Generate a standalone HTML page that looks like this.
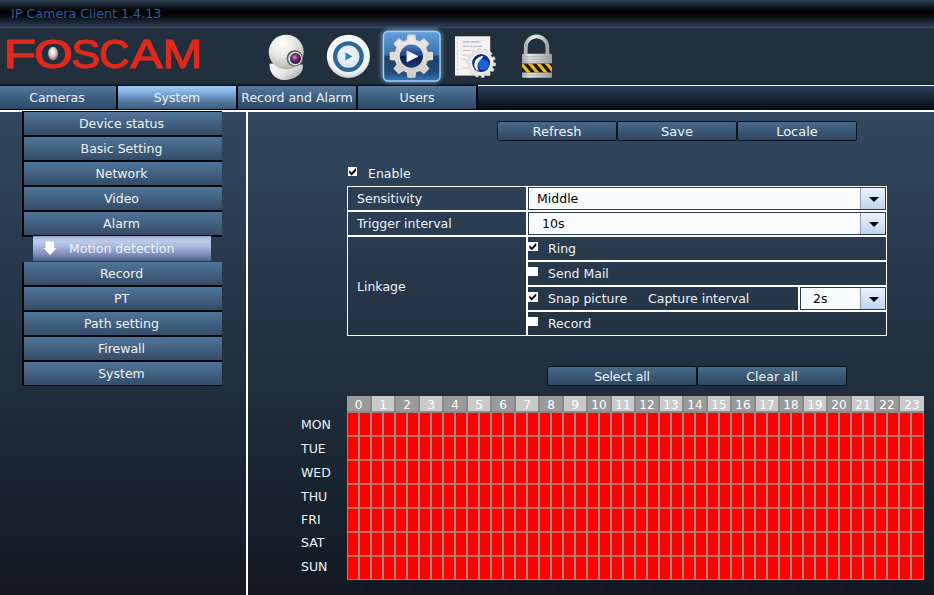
<!DOCTYPE html>
<html>
<head>
<meta charset="utf-8">
<title>IP Camera Client</title>
<style>
html,body{margin:0;padding:0;}
body{width:934px;height:595px;overflow:hidden;position:relative;background:#1a2230;
  font-family:"DejaVu Sans","Liberation Sans",sans-serif;font-size:12.5px;color:#eef2f6;}
.abs{position:absolute;}
#titlebar{left:0;top:0;width:934px;height:30px;background:linear-gradient(to bottom,#2f3f52 0px,#18222e 5px,#060809 10px,#000000 13px,#090b0d 16px,#161e28 20px,#223048 24.5px,#2b3d52 26.5px,#34495b 27.5px,#1e2d39 29px,#21303c 30px);}
#titletxt{left:11px;top:6px;color:#2a5da3;font-size:12.7px;line-height:16px;white-space:nowrap;}
#header{left:0;top:30px;width:934px;height:55px;background:linear-gradient(to bottom,#21303c 0px,#21303c 52px,#1c2a35 53.5px,#13202a 55px);}
#tabbar{left:0;top:85px;width:934px;height:25px;background:linear-gradient(to bottom,#ffffff 0px,#ffffff 1px,#2c405a 1px,#1d2b3e 10px,#0f1620 20px,#080c12 25px);}
.tab{position:absolute;top:0;height:23px;width:118px;text-align:center;line-height:23px;border-right:2px solid #03060a;border-top:1px solid #03060a;border-bottom:1px solid #03060a;background:linear-gradient(to bottom,#587a9b 0%,#45668a 35%,#385778 65%,#2e4966 100%);white-space:nowrap;}
.tab.sel{background:linear-gradient(to bottom,#9fcbf3 0%,#86b3e2 25%,#6690be 50%,#4f7198 75%,#3f5b7b 100%);}
#hline{left:0;top:110px;width:934px;height:2px;background:#fff;}
#main{left:0;top:112px;width:934px;height:483px;
  background:linear-gradient(to bottom,#324860 0%,#121922 100%);}
#vline{left:246px;top:110px;width:2px;height:485px;background:#fff;}
.sb{position:absolute;left:22px;width:195px;padding-right:3px;height:23px;line-height:24px;text-align:center;
  border-left:2px solid #04070b;border-bottom:2px solid #04070b;
  background:linear-gradient(to bottom,#50759a 0%,#436382 45%,#344c67 100%);white-space:nowrap;}
#sbtop{left:22px;top:111px;width:200px;height:1px;background:#04070b;}
#motion{left:33px;top:236px;width:178px;height:24.5px;line-height:26px;background:linear-gradient(to bottom,#8f9fc3 0%,#b4c2e2 10%,#bccae8 22%,#a9b9dd 42%,#90a0cc 60%,#7484b2 80%,#5a6a92 95%,#536088 100%);white-space:nowrap;}
.btn{position:absolute;height:18px;line-height:20px;font-size:13px;width:118px;text-align:center;border:1px solid #0b131d;
  background:linear-gradient(to bottom,#4a6a89 0%,#3b5876 50%,#30475f 100%);border-radius:2px;white-space:nowrap;}
.cb{position:absolute;width:9.6px;height:9.7px;background:#fff;}
.lbl{position:absolute;white-space:nowrap;line-height:16px;margin-top:1px;}
.cell{position:absolute;border:1px solid #fff;box-sizing:border-box;}
.sl{position:absolute;box-sizing:border-box;border:1px solid #2b3a4d;background:#fbfcfe;color:#000;}
.sl .dd{position:absolute;right:0;top:0;bottom:0;width:24px;border-left:1px solid #8c9cc0;
  background:linear-gradient(to bottom,#edf3fb 0%,#d6e4f6 50%,#bdd3ef 100%);}
.sl .dd:after{content:"";position:absolute;left:8px;top:8.7px;border-left:5px solid transparent;border-right:5px solid transparent;border-top:5px solid #000;}
.sl span{position:absolute;top:3px;margin-left:-1px;line-height:16px;white-space:nowrap;}
#grid{left:347px;top:396px;width:577px;height:184px;background:#8a8a8a;overflow:hidden;}
#ghead{position:absolute;left:0;top:0;width:577px;height:15px;}
#ghead div{position:absolute;top:0;width:22px;height:15px;line-height:19px;overflow:hidden;text-align:center;font-size:12px;color:#fff;}
#ghead .h0{background:#9b9b9b;}
#ghead .h1{background:#c9c9c9;}
#ghead .h0:first-child{left:0 !important;width:23px;}
#ghead .h1:last-child{width:24px;}
#gbody{position:absolute;left:0;top:15px;width:577px;height:169px;
 background:
 linear-gradient(#8a8a8a,#8a8a8a) 0 0/100% 2px no-repeat,
 linear-gradient(#b88080,#b88080) 576px 0/1px 100% no-repeat,
 linear-gradient(to bottom,#fe0000 0,#fe0000 22px,#cc6e62 22px,#cc6e62 24px) 575px 2px/1px 24px repeat-y,
 repeating-linear-gradient(to right,#9c8686 0px,#9c8686 2px,transparent 2px,transparent 12px) -1px 0/12px 100% repeat-x,
 repeating-linear-gradient(to bottom,#cc6e62 0px,#cc6e62 2px,transparent 2px,transparent 24px) 0 0/100% 24px repeat-y,
 #fe0000;}
.cb.on:after{content:"";position:absolute;left:0;top:0;width:10px;height:10px;background:#000;clip-path:polygon(1.4px 3.4px,3.8px 5.8px,8.2px 1.2px,8.2px 4.1px,3.8px 8.6px,1.4px 6.3px);}
</style>
</head>
<body>
<div id="titlebar" class="abs"></div>
<div id="titletxt" class="abs">IP Camera Client 1.4.13</div>
<div id="header" class="abs"></div>
<svg id="hdr" class="abs" style="left:0;top:0" width="934" height="86" viewBox="0 0 934 86">
<defs>
<radialGradient id="gSph" cx="0.38" cy="0.25" r="0.85"><stop offset="0" stop-color="#ffffff"/><stop offset="0.4" stop-color="#e9e9e7"/><stop offset="0.75" stop-color="#c6c6c4"/><stop offset="1" stop-color="#9a9a9a"/></radialGradient>
<linearGradient id="gBase" x1="0" y1="0" x2="1" y2="0.6"><stop offset="0" stop-color="#f6f6f6"/><stop offset="0.5" stop-color="#ececec"/><stop offset="1" stop-color="#b4b4b4"/></linearGradient>
<radialGradient id="gLens" cx="0.4" cy="0.35" r="0.7"><stop offset="0" stop-color="#c898cc"/><stop offset="0.45" stop-color="#7a3282"/><stop offset="1" stop-color="#2c0c32"/></radialGradient>
<linearGradient id="gRing" x1="0" y1="0" x2="1" y2="1"><stop offset="0" stop-color="#4c5246"/><stop offset="1" stop-color="#7c8074"/></linearGradient>
<radialGradient id="gPlayO" cx="0.5" cy="0.4" r="0.6"><stop offset="0" stop-color="#ffffff"/><stop offset="0.8" stop-color="#f2f5f8"/><stop offset="1" stop-color="#c4ccd6"/></radialGradient>
<radialGradient id="gPlayI" cx="0.5" cy="0.45" r="0.6"><stop offset="0" stop-color="#ffffff"/><stop offset="1" stop-color="#d4dfea"/></radialGradient>
<linearGradient id="gTile" x1="0" y1="0" x2="0" y2="1"><stop offset="0" stop-color="#62a0dc"/><stop offset="0.47" stop-color="#3a72ac"/><stop offset="0.51" stop-color="#1f4268"/><stop offset="0.8" stop-color="#1f4874"/><stop offset="1" stop-color="#3a78b8"/></linearGradient>
<linearGradient id="gGear" x1="0" y1="0" x2="0" y2="1"><stop offset="0" stop-color="#efeeea"/><stop offset="1" stop-color="#cdcac3"/></linearGradient>
<linearGradient id="gHub" x1="0" y1="0" x2="0" y2="1"><stop offset="0" stop-color="#4d7cc0"/><stop offset="0.5" stop-color="#1c3c7c"/><stop offset="0.52" stop-color="#0c1c48"/><stop offset="1" stop-color="#1c3a78"/></linearGradient>
<radialGradient id="gHub2" cx="0.5" cy="0.55" r="0.6"><stop offset="0" stop-color="#2a78e8"/><stop offset="0.7" stop-color="#0c3cb0"/><stop offset="1" stop-color="#082070"/></radialGradient>
<linearGradient id="gLockB" x1="0" y1="0" x2="1" y2="0"><stop offset="0" stop-color="#a9adad"/><stop offset="0.25" stop-color="#e4e6e6"/><stop offset="0.6" stop-color="#c6c9c9"/><stop offset="1" stop-color="#969a9a"/></linearGradient>
<linearGradient id="gShk" x1="0" y1="0" x2="1" y2="0"><stop offset="0" stop-color="#aeb2b2"/><stop offset="0.3" stop-color="#eceeee"/><stop offset="0.7" stop-color="#d0d3d3"/><stop offset="1" stop-color="#a4a8a8"/></linearGradient>
<radialGradient id="gEye" cx="0.45" cy="0.4" r="0.6"><stop offset="0" stop-color="#ffffff"/><stop offset="0.5" stop-color="#d8d0cc"/><stop offset="1" stop-color="#8c7470"/></radialGradient>
<filter id="fGlow" x="-30%" y="-30%" width="160%" height="160%"><feGaussianBlur stdDeviation="2.2"/></filter>
<clipPath id="cLock"><rect x="522" y="63.5" width="30" height="9"/></clipPath>
</defs>
<!-- logo -->
<title>FOSCAM</title>
<text aria-label="FOSCAM" y="68.30" font-family="Liberation Sans, sans-serif" font-size="40.99" fill="#e2281b" stroke="#e2281b" stroke-width="1.0" stroke-linejoin="round"><tspan x="2.90" textLength="32.80" lengthAdjust="spacingAndGlyphs">F</tspan><tspan x="33.64" textLength="39.01" lengthAdjust="spacingAndGlyphs">O</tspan><tspan x="71.10" textLength="28.93" lengthAdjust="spacingAndGlyphs">S</tspan><tspan x="98.75" textLength="30.40" lengthAdjust="spacingAndGlyphs">C</tspan><tspan x="130.10" textLength="32.24" lengthAdjust="spacingAndGlyphs">A</tspan><tspan x="162.27" textLength="39.91" lengthAdjust="spacingAndGlyphs">M</tspan></text>
<ellipse cx="53.1" cy="53.5" rx="5" ry="6.8" fill="url(#gEye)"/>
<!-- webcam -->
<path d="M269.6 63.5 C268.8 71.5 274 79.6 283.5 79.9 C293.5 80.1 301.8 75.2 302.9 67.8 L302.9 64.5 Z" fill="url(#gBase)"/>
<ellipse cx="286.2" cy="52.1" rx="17.5" ry="17.3" fill="url(#gSph)"/>
<circle cx="294.8" cy="58.4" r="8.2" fill="url(#gRing)"/>
<circle cx="295.1" cy="58.5" r="6.8" fill="#e6e6e2"/>
<circle cx="295.5" cy="58.6" r="5.5" fill="#3a2840"/>
<circle cx="295.6" cy="58.6" r="4.6" fill="url(#gLens)"/>
<!-- play -->
<circle cx="348.4" cy="56.3" r="21.6" fill="url(#gPlayO)"/>
<circle cx="348.4" cy="56.6" r="13.2" fill="none" stroke="#2e6797" stroke-width="4.4"/>
<circle cx="348.4" cy="56.6" r="10.6" fill="url(#gPlayI)"/>
<path d="M345.4 52.2 L352.4 56.4 L345.4 60.6 Z" fill="#1b8fb2"/>
<!-- gear tile -->
<rect x="381.5" y="29.5" width="60" height="53" rx="7" fill="#7fb8f0" opacity="0.75" filter="url(#fGlow)"/>
<rect x="383.5" y="31.5" width="56.5" height="49.5" rx="4.5" fill="url(#gTile)" stroke="#a2ccf6" stroke-width="1.4"/>
<path d="M407.45 40.18 L408.08 35.16 L414.72 35.16 L415.35 40.18 L419.86 42.05 L423.86 38.95 L428.55 43.64 L425.45 47.64 L427.32 52.15 L432.34 52.78 L432.34 59.42 L427.32 60.05 L425.45 64.56 L428.55 68.56 L423.86 73.25 L419.86 70.15 L415.35 72.02 L414.72 77.04 L408.08 77.04 L407.45 72.02 L402.94 70.15 L398.94 73.25 L394.25 68.56 L397.35 64.56 L395.48 60.05 L390.46 59.42 L390.46 52.78 L395.48 52.15 L397.35 47.64 L394.25 43.64 L398.94 38.95 L402.94 42.05 Z" fill="url(#gGear)" stroke="#dedbd5" stroke-width="1.4" stroke-linejoin="round"/>
<circle cx="411.4" cy="56.1" r="11.6" fill="url(#gHub)"/>
<path d="M407.2 51.4 L417.4 56.4 L407.2 61.4 Z" fill="#f4f6fa" stroke="#f4f6fa" stroke-width="1.2" stroke-linejoin="round"/>
<!-- doc -->
<rect x="455" y="36.3" width="35.2" height="39.3" fill="#f5f1ef"/>
<g stroke="#aeb6c8" stroke-width="1" stroke-dasharray="1.2 2.6"><line x1="457.6" y1="38.5" x2="457.6" y2="74"/></g>
<g stroke="#a9afc4" stroke-width="1.1"><line x1="462.5" y1="41.9" x2="481" y2="41.9" stroke-dasharray="7 1 9 1"/><line x1="462.5" y1="46.3" x2="483" y2="46.3" stroke-dasharray="6 1 3 1 9 1"/><line x1="462.5" y1="50.6" x2="470" y2="50.6" stroke="#c8c0cc"/><line x1="462.5" y1="55" x2="467" y2="55" stroke="#c8c0cc"/><line x1="462.5" y1="59.4" x2="466" y2="59.4" stroke="#ccc6d0"/><line x1="462.5" y1="68" x2="465.5" y2="68" stroke="#ccc6d0"/></g>
<path d="M493.29 62.52 L495.70 63.15 L495.44 65.75 L492.95 65.89 L492.29 67.86 L494.19 69.47 L492.82 71.70 L490.53 70.75 L489.07 72.23 L490.09 74.51 L487.89 75.93 L486.23 74.07 L484.28 74.78 L484.20 77.27 L481.61 77.59 L480.92 75.20 L478.85 74.99 L477.71 77.20 L475.22 76.37 L475.65 73.91 L473.87 72.83 L471.88 74.32 L470.01 72.49 L471.45 70.47 L470.32 68.72 L467.88 69.20 L466.99 66.74 L469.17 65.54 L468.91 63.48 L466.50 62.85 L466.76 60.25 L469.25 60.11 L469.91 58.14 L468.01 56.53 L469.38 54.30 L471.67 55.25 L473.13 53.77 L472.11 51.49 L474.31 50.07 L475.97 51.93 L477.92 51.22 L478.00 48.73 L480.59 48.41 L481.28 50.80 L483.35 51.01 L484.49 48.80 L486.98 49.63 L486.55 52.09 L488.33 53.17 L490.32 51.68 L492.19 53.51 L490.75 55.53 L491.88 57.28 L494.32 56.80 L495.21 59.26 L493.03 60.46 Z" fill="#e9e7e4" stroke="#cfcdc9" stroke-width="0.6" stroke-linejoin="round"/>
<circle cx="481.1" cy="63.1" r="10" fill="#fbfbfd"/>
<circle cx="481.1" cy="63.1" r="9" fill="#0e2e82"/>
<circle cx="483.5" cy="64.6" r="5.4" fill="#1a62d6"/>
<path d="M483.4 55.9 C477.4 56.2 473.6 61 474.5 66.2 C475.1 68.9 476.8 70.5 478.8 70.7 C476.9 67.6 477.1 63.5 479.3 61 C480.6 59.6 482.7 58.3 483.4 55.9 Z" fill="#f4f8ff"/>
<!-- lock -->
<path d="M525.7 55 L525.7 47.2 A10.85 10.85 0 0 1 547.4 47.2 L547.4 55" fill="none" stroke="url(#gShk)" stroke-width="3.7"/>
<rect x="522" y="53.8" width="30" height="24" rx="1.2" fill="url(#gLockB)"/>
<g stroke="#9a9e9e" stroke-width="0.8" opacity="0.8"><line x1="522" y1="56.8" x2="552" y2="56.8"/><line x1="522" y1="59.3" x2="552" y2="59.3"/><line x1="522" y1="61.8" x2="552" y2="61.8"/><line x1="522" y1="75" x2="552" y2="75"/></g>
<rect x="522" y="63.5" width="30" height="9" fill="#16140e"/>
<g clip-path="url(#cLock)" stroke="#f2b41e" stroke-width="3.2"><line x1="519" y1="61" x2="531" y2="75"/><line x1="527.5" y1="61" x2="539.5" y2="75"/><line x1="536" y1="61" x2="548" y2="75"/><line x1="544.5" y1="61" x2="556.5" y2="75"/><line x1="510.5" y1="61" x2="522.5" y2="75"/></g>
</svg>
<div id="tabbar" class="abs">
  <div class="tab" style="left:-2px">Cameras</div>
  <div class="tab sel" style="left:118px">System</div>
  <div class="tab" style="left:238px">Record and Alarm</div>
  <div class="tab" style="left:358px">Users</div>
</div>
<div id="main" class="abs"></div>
<div id="hline" class="abs"></div>
<div id="vline" class="abs"></div>
<div id="sbtop" class="abs"></div>
<div class="sb" style="top:112px">Device status</div>
<div class="sb" style="top:137px">Basic Setting</div>
<div class="sb" style="top:162px">Network</div>
<div class="sb" style="top:187px">Video</div>
<div class="sb" style="top:212px">Alarm</div>
<div id="motion" class="abs"><svg style="position:absolute;left:7px;top:4px" width="20" height="18" viewBox="0 0 20 18"><path d="M5.4 2.3 L14.2 2.3 L14.2 8.4 L17.2 8.4 L10.1 16 L3 8.4 L5.4 8.4 Z" fill="#4a5a84" opacity="0.5"/><path d="M5.4 1.5 L14.2 1.5 L14.2 8 L17 8 L10.1 15.3 L3.3 8 L5.4 8 Z" fill="#ffffff"/></svg><span style="position:absolute;left:36px">Motion detection</span></div>
<div class="sb" style="top:262px">Record</div>
<div class="sb" style="top:287px">PT</div>
<div class="sb" style="top:312px">Path setting</div>
<div class="sb" style="top:337px">Firewall</div>
<div class="sb" style="top:362px;border-bottom-width:1px">System</div>

<div class="btn" style="left:497px;top:121px">Refresh</div>
<div class="btn" style="left:617px;top:121px">Save</div>
<div class="btn" style="left:737px;top:121px">Locale</div>

<div class="cb on" style="left:347.8px;top:166.8px"></div>
<div class="lbl" style="left:368px;top:165px">Enable</div>

<div class="cell" style="left:347px;top:186px;width:180px;height:25px"></div>
<div class="cell" style="left:527px;top:186px;width:360px;height:25px"></div>
<div class="cell" style="left:347px;top:211px;width:180px;height:25px"></div>
<div class="cell" style="left:527px;top:211px;width:360px;height:25px"></div>
<div class="cell" style="left:347px;top:236px;width:180px;height:100px"></div>
<div class="cell" style="left:527px;top:236px;width:360px;height:25px"></div>
<div class="cell" style="left:527px;top:261px;width:360px;height:25px"></div>
<div class="cell" style="left:527px;top:286px;width:272px;height:25px"></div>
<div class="cell" style="left:799px;top:286px;width:88px;height:25px"></div>
<div class="cell" style="left:527px;top:311px;width:360px;height:25px"></div>

<div class="lbl" style="left:357px;top:190px">Sensitivity</div>
<div class="lbl" style="left:357px;top:215px">Trigger interval</div>
<div class="lbl" style="left:357px;top:278px">Linkage</div>

<div class="sl" style="left:528px;top:187px;width:358px;height:23px"><span style="left:9px">Middle</span><div class="dd"></div></div>
<div class="sl" style="left:528px;top:212px;width:358px;height:23px"><span style="left:14px">10s</span><div class="dd"></div></div>
<div class="sl" style="left:800px;top:287px;width:86px;height:23px"><span style="left:13px">2s</span><div class="dd"></div></div>

<div class="cb on" style="left:528px;top:241.6px"></div><div class="lbl" style="left:548px;top:240px">Ring</div>
<div class="cb" style="left:528px;top:266.5px"></div><div class="lbl" style="left:548px;top:265px">Send Mail</div>
<div class="cb on" style="left:528px;top:292px"></div><div class="lbl" style="left:548px;top:290px">Snap picture</div>
<div class="lbl" style="left:648px;top:290px">Capture interval</div>
<div class="cb" style="left:528px;top:316.7px"></div><div class="lbl" style="left:548px;top:315px">Record</div>

<div class="btn" style="left:547px;top:366px;width:148px;font-size:12.5px;letter-spacing:-0.15px">Select all</div>
<div class="btn" style="left:697px;top:366px;width:148px;font-size:12.5px">Clear all</div>

<div id="grid" class="abs">
<div id="ghead"><div class="h0" style="left:1px">0</div><div class="h1" style="left:25px">1</div><div class="h0" style="left:49px">2</div><div class="h1" style="left:73px">3</div><div class="h0" style="left:97px">4</div><div class="h1" style="left:121px">5</div><div class="h0" style="left:145px">6</div><div class="h1" style="left:169px">7</div><div class="h0" style="left:193px">8</div><div class="h1" style="left:217px">9</div><div class="h0" style="left:241px">10</div><div class="h1" style="left:265px">11</div><div class="h0" style="left:289px">12</div><div class="h1" style="left:313px">13</div><div class="h0" style="left:337px">14</div><div class="h1" style="left:361px">15</div><div class="h0" style="left:385px">16</div><div class="h1" style="left:409px">17</div><div class="h0" style="left:433px">18</div><div class="h1" style="left:457px">19</div><div class="h0" style="left:481px">20</div><div class="h1" style="left:505px">21</div><div class="h0" style="left:529px">22</div><div class="h1" style="left:553px">23</div></div>
<div id="gbody"></div>
</div>
<div class="lbl" style="left:301px;top:416px">MON</div><div class="lbl" style="left:301px;top:440px">TUE</div><div class="lbl" style="left:301px;top:464px">WED</div><div class="lbl" style="left:301px;top:488px">THU</div><div class="lbl" style="left:301px;top:511px">FRI</div><div class="lbl" style="left:301px;top:534px">SAT</div><div class="lbl" style="left:301px;top:558px">SUN</div>
</body>
</html>
